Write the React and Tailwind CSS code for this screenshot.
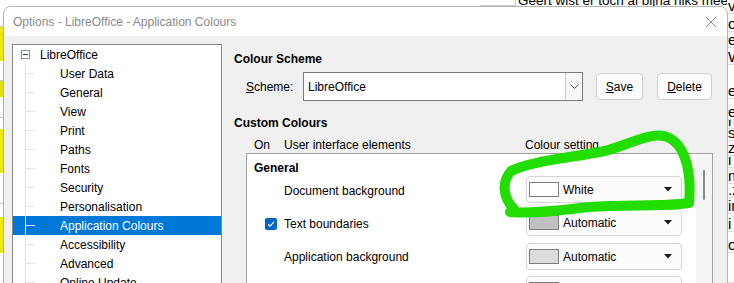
import React from 'react';

const treeItems = [
  'User Data', 'General', 'View', 'Print', 'Paths', 'Fonts', 'Security',
  'Personalisation', 'Application Colours', 'Accessibility', 'Advanced', 'Online Update',
];

const colourRows = [
  { label: 'Document background', check: false, swatch: 'bg-white', value: 'White' },
  { label: 'Text boundaries', check: true, swatch: 'bg-[#c0c0c0]', value: 'Automatic' },
  { label: 'Application background', check: false, swatch: 'bg-[#dcdcdc]', value: 'Automatic' },
  { label: '', check: true, swatch: 'bg-[#c0c0c0]', value: '' },
];

// fragments of the document behind the dialog, right edge
const docRight = [
  [14, 'v'], [18, 'o'], [17, 'e'], [17, 'W'], [34, 'e'], [22, 'e'], [9, 'n,'], [12, 's'],
  [15, 'zu'], [12, 'i'], [17, 'm'], [14, '.z'], [16, 'in'], [18, 'i'], [22, 'o'], [30, ''],
];

function Check() {
  return (
    <div className="w-[12px] h-[12px] rounded-[2px] bg-[#0067c0] flex items-center justify-center">
      <svg width="8" height="8" viewBox="0 0 8 8">
        <path d="M1 4.2 L3 6.2 L7 1.8" stroke="white" strokeWidth="1.1" fill="none" />
      </svg>
    </div>
  );
}

export default function App() {
  return (
    <div className="relative w-[734px] h-[283px] overflow-hidden bg-white text-[12px] text-black" style={{ fontFamily: '"Liberation Sans", Arial, sans-serif' }}>
      {/* document behind */}
      <div className="absolute left-0 top-0 w-[4px] h-full flex flex-col">
        <div className="h-[27px] border-b border-[#c8c8c8]" />
        <div className="h-[34px] bg-[#eaea00]" />
        <div className="h-[19px]" />
        <div className="h-[17px] bg-[#dde000] border-t border-[#c8c8c8]" />
        <div className="h-[20px]" />
        <div className="h-[12px] border-t border-[#c8c8c8]" />
        <div className="h-[44px] bg-[#eaea00]" />
        <div className="h-[30px]" />
        <div className="h-[14px] border-t border-[#c8c8c8]" />
        <div className="h-[36px] bg-[#eaea00]" />
      </div>
      <div className="absolute left-[515px] top-0 w-[212px] h-[6px] border-l border-[#c8c8c8] overflow-hidden">
        <div className="pl-[2px] -mt-[7px] text-[13.5px] whitespace-nowrap leading-[15px]">Geert wist er toch al bijna niks meer v</div>
      </div>
      <div className="absolute left-[480px] top-[5px] w-[35px] border-t border-[#c8c8c8]" />
      <div className="absolute left-[727px] top-0 w-[7px] h-full flex flex-col overflow-hidden">
        {docRight.map(([h, t], i) => (
          <div key={i} style={{ height: h }} className="border-b border-[#e0e0e0] text-[15px] leading-[15px] flex items-end whitespace-nowrap pl-[1px] overflow-hidden">
            {t}
          </div>
        ))}
      </div>

      {/* dialog window */}
      <div className="absolute left-[3px] top-[6px] w-[725px] h-[300px] rounded-t-[8px] border border-[#b4b4b4] bg-[#f0f0f0] overflow-hidden flex flex-col">
        <div className="h-[29px] bg-white flex items-center justify-between pl-[9px] pr-[9px] shrink-0">
          <span className="text-[#8a8a8a]">Options - LibreOffice - Application Colours</span>
          <svg width="12" height="12" viewBox="0 0 12 12" className="mr-[1px]">
            <path d="M1 1 L11 11 M11 1 L1 11" stroke="#8a8a8a" strokeWidth="1" />
          </svg>
        </div>
        <div className="flex pt-[8px] pl-[8px] gap-[12px]">
          {/* tree */}
          <div className="w-[210px] h-[260px] bg-white border border-[#828790] relative shrink-0">
            <div className="h-[19px] flex items-center">
              <div className="ml-[8px] w-[9px] h-[9px] border border-[#919191] flex items-center justify-center bg-white">
                <div className="w-[5px] h-[1px] bg-[#1f3f8f]" />
              </div>
              <span className="ml-[10px]">LibreOffice</span>
            </div>
            <div className="absolute left-[12px] top-[19px] w-px h-[240px] bg-[#e3e3e3]" />
            {treeItems.map((t) => {
              const sel = t === 'Application Colours';
              return (
                <div key={t} className={`h-[19px] flex items-center relative ${sel ? 'bg-[#0078d7] text-white' : ''}`}>
                  <div className={`absolute left-[12px] top-[9px] w-[10px] h-px ${sel ? 'bg-white' : 'bg-[#e3e3e3]'}`} />
                  {sel && <div className="absolute left-[12px] top-0 w-px h-full bg-white" />}
                  <span className="ml-[47px]">{t}</span>
                </div>
              );
            })}
          </div>

          {/* right panel */}
          <div className="flex flex-col w-[480px]">
            <div className="mt-[7px] h-[16px] leading-[16px] font-bold">Colour Scheme</div>
            <div className="mt-[5px] h-[29px] flex items-center">
              <span className="ml-[12px] w-[57px]"><span className="underline">S</span>cheme:</span>
              <div className="w-[280px] h-[29px] bg-white border border-[#7a7a7a] flex items-center">
                <span className="ml-[4px] flex-1">LibreOffice</span>
                <div className="w-[17px] h-full border-l border-[#c8c8c8] bg-[#f7f7f7] flex items-center justify-center">
                  <svg width="9" height="6" viewBox="0 0 9 6">
                    <path d="M0.5 0.5 L4.5 4.5 L8.5 0.5" stroke="#555" strokeWidth="1" fill="none" />
                  </svg>
                </div>
              </div>
              <button className="ml-[13px] w-[47px] h-[27px] rounded-[4px] border border-[#d0d0d0] bg-[#fdfdfd]">
                <span className="underline">S</span>ave
              </button>
              <button className="ml-[14px] w-[55px] h-[27px] rounded-[4px] border border-[#d0d0d0] bg-[#fdfdfd]">
                <span className="underline">D</span>elete
              </button>
            </div>
            <div className="mt-[14px] h-[16px] leading-[16px] font-bold">Custom Colours</div>
            <div className="mt-[6px] h-[16px] leading-[16px] flex">
              <span className="ml-[20px] w-[30px]">On</span>
              <span className="w-[241px]">User interface elements</span>
              <span>Colour setting</span>
            </div>
            <div className="ml-[12px] w-[467px] h-[140px] bg-white border border-[#a0a0a0] flex">
              <div className="flex-1 flex flex-col">
                <div className="mt-[6px] ml-[7px] h-[16px] leading-[16px] font-bold">General</div>
                {colourRows.map((r, i) => (
                  <div key={i} className="h-[33.3px] shrink-0 flex items-start">
                    <div className="h-[27px] flex items-center w-[279px] pt-[2px]">
                      <div className="ml-[18px] w-[12px]">{r.check && <Check />}</div>
                      <span className="ml-[7px]">{r.label}</span>
                    </div>
                    <div className="w-[156px] h-[27px] rounded-[4px] border border-[#d5d5d5] bg-[#fcfcfc] flex items-center">
                      <div className={`ml-[2px] w-[30px] h-[15px] border border-[#7c7c7c] ${r.swatch}`} />
                      <span className="ml-[4px] flex-1 pt-[1px]">{r.value}</span>
                      {r.value && (
                        <svg width="8" height="5" viewBox="0 0 8 5" className="mr-[9px]">
                          <path d="M0 0 L8 0 L4 4.5 Z" fill="#1a1a1a" />
                        </svg>
                      )}
                    </div>
                  </div>
                ))}
              </div>
              <div className="w-[16px] bg-[#f5f5f5] relative">
                <div className="absolute left-[7px] top-[16px] w-[2px] h-[30px] rounded bg-[#8a8a8a]" />
              </div>
            </div>
          </div>
        </div>
      </div>

      {/* green marker scribble */}
      <svg className="absolute left-0 top-0 pointer-events-none" width="734" height="283">
        <path
          d="M514 209 C502 197 502 181 511 171 C530 161 570 158 605 151 C628 145 648 133 664 136 C684 141 692 169 689 203 C660 207 625 204 590 207 C560 210 535 214 510 212"
          stroke="#22dd00" strokeWidth="10" fill="none" strokeLinecap="round" strokeLinejoin="round"
        />
      </svg>
    </div>
  );
}
